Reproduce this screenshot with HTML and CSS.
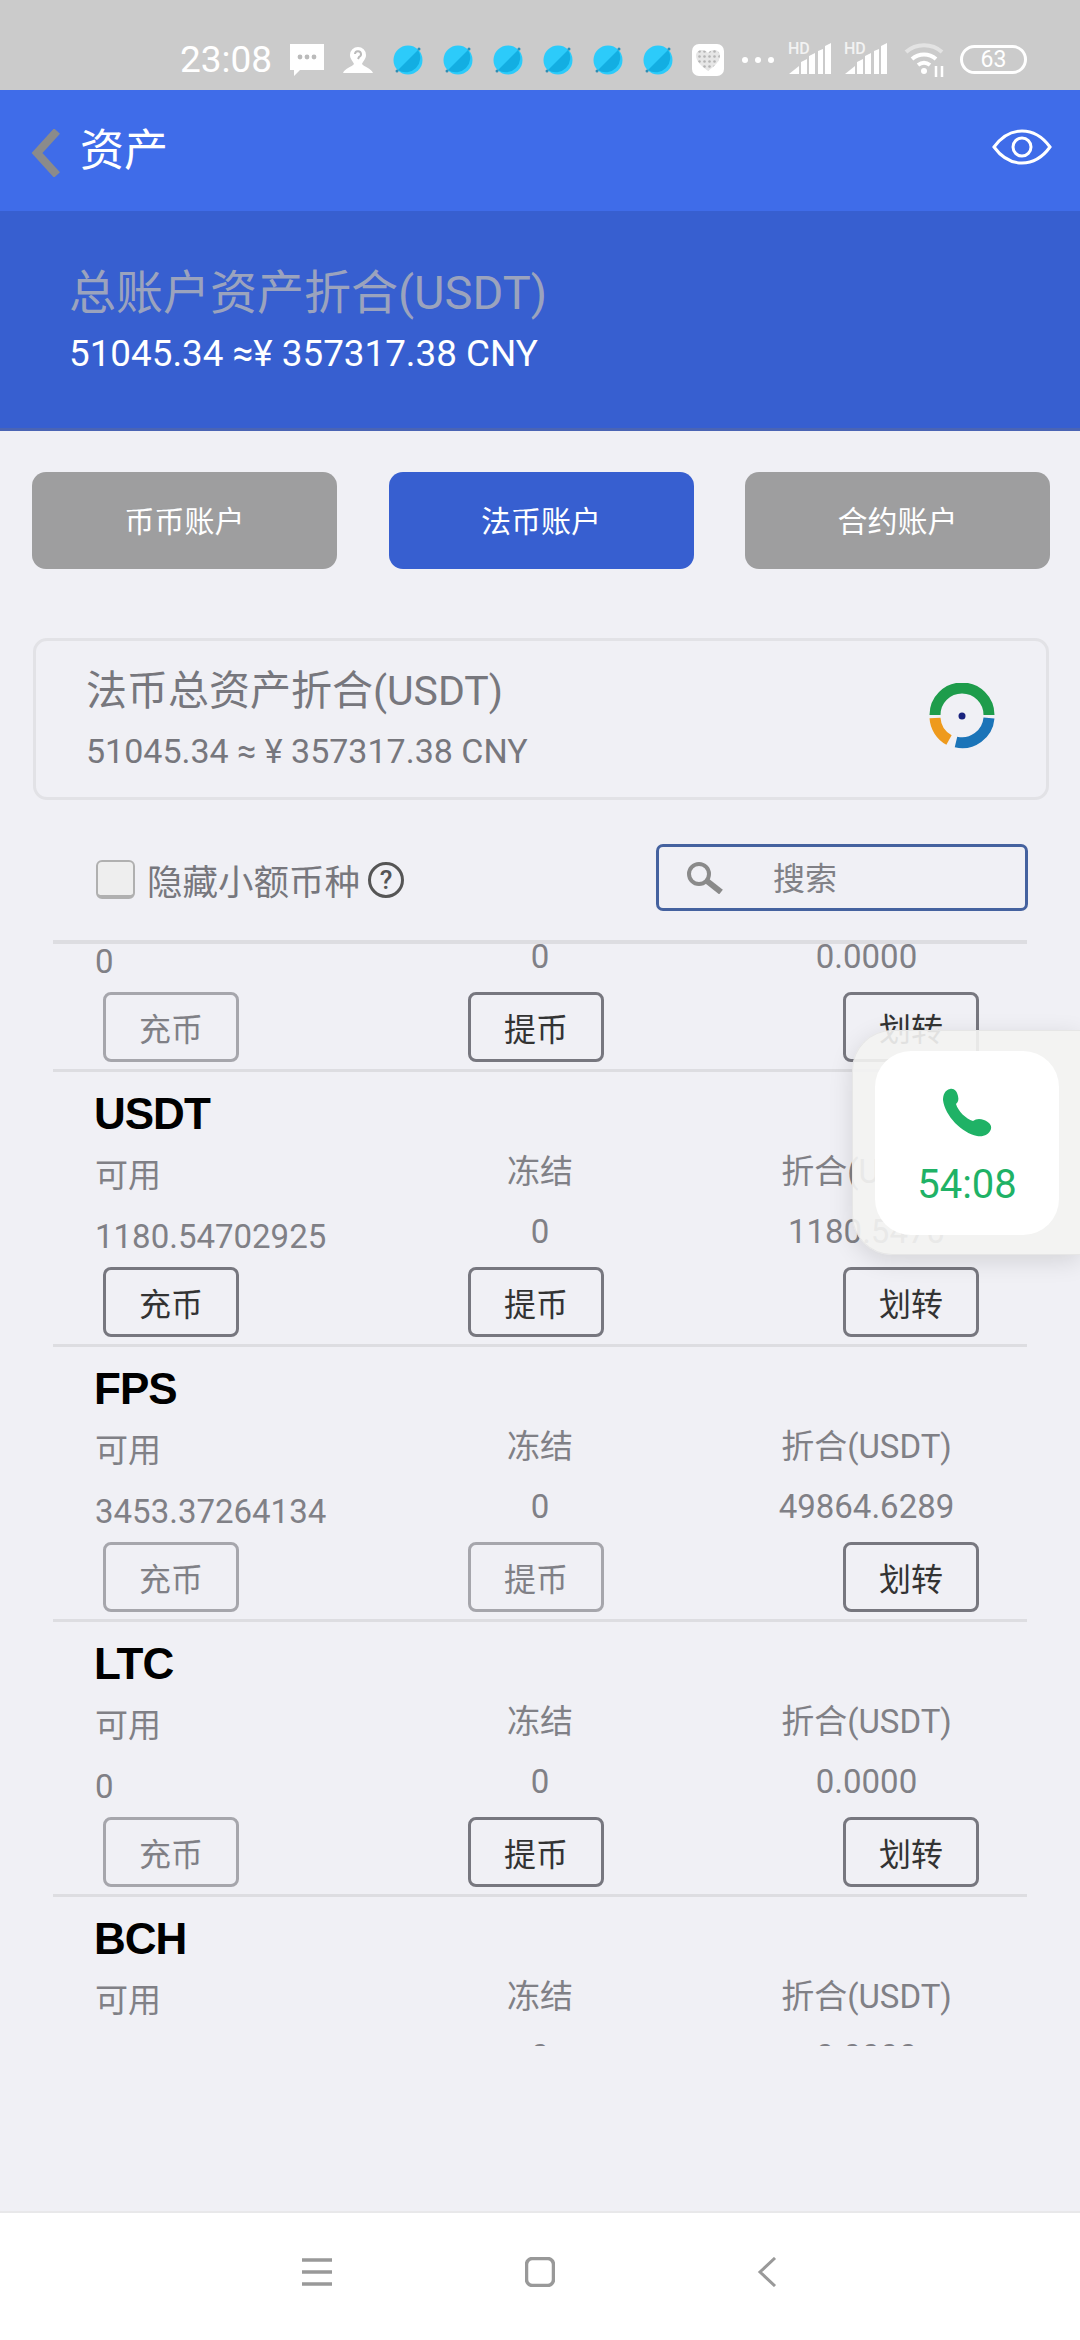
FILE: index.html
```html
<!DOCTYPE html>
<html lang="zh-CN">
<head>
    <meta charset="UTF-8">
    <meta name="viewport" content="width=device-width, initial-scale=1.0">
    <title>资产</title>
    <link rel="stylesheet" href="styles.css">
</head>
<body>
    <svg class="defs" width="0" height="0">
        <symbol id="globe" viewBox="0 0 32 32">
            <circle cx="16" cy="16" r="14.500" fill="#2ccbfa"/>
            <path d="M26 6A14.500 14.500 0 0 1 6 26Z" fill="#13aee2"/>
            <circle cx="27" cy="5" r="1.500" fill="#2f8fb5"/>
            <circle cx="5" cy="27" r="1.500" fill="#2f8fb5"/>
        </symbol>
        <symbol id="signal" viewBox="0 0 44 36">
            <text x="0" y="12" class="hd">HD</text>
            <path d="M1 32l10-8v8zM13 32V20l6-3v15zM21 32V14l6-3v21zM30 32V9l5-2v25zM37 32V4l6-3v31z" fill="#fff"/>
        </symbol>
        <pattern id="heart-dots" width="5" height="5" patternUnits="userSpaceOnUse">
            <rect width="5" height="5" fill="#e6e6e6"/>
            <circle cx="2.500" cy="2.500" r="1.300" fill="#b4b4b4"/>
        </pattern>
    </svg>

    <div class="app">
        <div class="status-bar">
            <span class="time">23:08</span>
            <svg class="st-msg" width="34" height="32" viewBox="0 0 34 32"><path d="M0 0h34v26H10l-6 6v-6H0z" fill="#fff"/><circle cx="10" cy="13" r="2.400" fill="#bbb"/><circle cx="17" cy="13" r="2.400" fill="#bbb"/><circle cx="24" cy="13" r="2.400" fill="#bbb"/></svg>
            <svg class="st-person" width="30" height="27" viewBox="0 0 30 27"><path d="M15 1a8 8 0 0 1 8 8c0 4-3 6-4 9 2 3 9 4 11 9H0c2-5 9-6 11-9-1-3-4-5-4-9a8 8 0 0 1 8-8z" fill="#fff"/><path d="M12 8a3 3 0 1 1 4 3l-1 2" stroke="#bbb" stroke-width="2" fill="none"/></svg>
            <svg class="st-globe" width="32" height="32"><use href="#globe"/></svg>
            <svg class="st-globe" width="32" height="32"><use href="#globe"/></svg>
            <svg class="st-globe" width="32" height="32"><use href="#globe"/></svg>
            <svg class="st-globe" width="32" height="32"><use href="#globe"/></svg>
            <svg class="st-globe" width="32" height="32"><use href="#globe"/></svg>
            <svg class="st-globe" width="32" height="32"><use href="#globe"/></svg>
            <svg class="st-heart" width="32" height="32" viewBox="0 0 32 32"><rect width="32" height="32" rx="7" fill="#fff"/><path d="M16 27C9 22 4 17 4 11.500C4 8 7 6 10 6c2.500 0 4.500 1 6 3 1.500-2 3.500-3 6-3 3 0 6 2 6 5.500C28 17 23 22 16 27z" fill="url(#heart-dots)"/></svg>
            <span class="st-dots"><i></i><i></i><i></i></span>
            <svg class="st-signal" width="44" height="36"><use href="#signal"/></svg>
            <svg class="st-signal" width="44" height="36"><use href="#signal"/></svg>
            <svg class="st-wifi" width="42" height="36" viewBox="0 0 42 36"><path d="M2 10C12 1 28 1 38 10" stroke="#e3e3e3" stroke-width="4" fill="none"/><path d="M8 17c7-6 17-6 24 0M14 23c4-3 8-3 12 0" stroke="#fff" stroke-width="4" fill="none"/><circle cx="20" cy="29" r="3" fill="#fff"/><path d="M32 24v11M38 24v11" stroke="#fff" stroke-width="2.500"/></svg>
            <span class="battery">63</span>
        </div>

        <div class="header">
            <svg class="back" width="30" height="48" viewBox="0 0 30 48"><path d="M26 2L6 24l20 22" stroke="#8b8b8b" stroke-width="8" fill="none"/></svg>
            <h1>资产</h1>
            <svg class="eye" width="60" height="36" viewBox="0 0 60 36"><path d="M2 18C10 7 20 2 30 2s20 5 28 16c-8 11-18 16-28 16S10 29 2 18z" stroke="#fff" stroke-width="3" fill="none"/><circle cx="30" cy="18" r="9" stroke="#fff" stroke-width="3" fill="none"/></svg>
        </div>

        <div class="banner">
            <div class="banner-title">总账户资产折合(USDT)</div>
            <div class="banner-value">51045.34 ≈¥ 357317.38 CNY</div>
        </div>

        <div class="tabs">
            <div class="tab">币币账户</div>
            <div class="tab active">法币账户</div>
            <div class="tab">合约账户</div>
        </div>

        <div class="summary">
            <div>
                <div class="summary-title">法币总资产折合(USDT)</div>
                <div class="summary-value">51045.34 ≈ ¥ 357317.38 CNY</div>
            </div>
            <svg class="summary-logo" width="66" height="66" viewBox="0 0 66 66">
                <g fill="none" stroke-width="11">
                    <path d="M6 32A27 27 0 0 1 60 32" stroke="#1e9c4b"/>
                    <path d="M60 35A27 27 0 0 1 27 59" stroke="#1b74b8"/>
                    <path d="M6 35A27 27 0 0 0 20 57" stroke="#ee9a1d"/>
                </g>
                <circle cx="33" cy="33" r="3.500" fill="#1a237e"/>
            </svg>
        </div>

        <div class="toolbar">
            <label class="hide-small">
                <input type="checkbox">
                <span>隐藏小额币种</span>
                <span class="help">?</span>
            </label>
            <div class="search">
                <svg width="40" height="32" viewBox="0 0 40 32"><circle cx="13" cy="12" r="10" stroke="#8a8a8a" stroke-width="4" fill="none"/><path d="M21 19l14 11" stroke="#8a8a8a" stroke-width="6"/></svg>
                <span>搜索</span>
            </div>
        </div>

        <div class="list">
            <div class="list-inner">
                <div class="row-cut">
                    <div class="cells values"><div class="c1">0</div><div class="c2">0</div><div class="c3">0.0000</div></div>
                    <div class="actions"><div class="btn btn-1 off">充币</div><div class="btn btn-2">提币</div><div class="btn btn-3">划转</div></div>
                </div>
                <div class="row">
                    <div class="coin">USDT</div>
                    <div class="cells labels"><div class="c1">可用</div><div class="c2">冻结</div><div class="c3">折合(USDT)</div></div>
                    <div class="cells values"><div class="c1">1180.54702925</div><div class="c2">0</div><div class="c3">1180.5470</div></div>
                    <div class="actions"><div class="btn btn-1">充币</div><div class="btn btn-2">提币</div><div class="btn btn-3">划转</div></div>
                </div>
                <div class="row">
                    <div class="coin">FPS</div>
                    <div class="cells labels"><div class="c1">可用</div><div class="c2">冻结</div><div class="c3">折合(USDT)</div></div>
                    <div class="cells values"><div class="c1">3453.37264134</div><div class="c2">0</div><div class="c3">49864.6289</div></div>
                    <div class="actions"><div class="btn btn-1 off">充币</div><div class="btn btn-2 off">提币</div><div class="btn btn-3">划转</div></div>
                </div>
                <div class="row">
                    <div class="coin">LTC</div>
                    <div class="cells labels"><div class="c1">可用</div><div class="c2">冻结</div><div class="c3">折合(USDT)</div></div>
                    <div class="cells values"><div class="c1">0</div><div class="c2">0</div><div class="c3">0.0000</div></div>
                    <div class="actions"><div class="btn btn-1 off">充币</div><div class="btn btn-2">提币</div><div class="btn btn-3">划转</div></div>
                </div>
                <div class="row">
                    <div class="coin">BCH</div>
                    <div class="cells labels"><div class="c1">可用</div><div class="c2">冻结</div><div class="c3">折合(USDT)</div></div>
                    <div class="cells values"><div class="c1">0</div><div class="c2">0</div><div class="c3">0.0000</div></div>
                </div>
            </div>
        </div>

        <div class="nav">
            <svg class="nav-menu" width="30" height="28" viewBox="0 0 30 28"><path d="M0 2h30M0 14h30M0 26h30" stroke="#999" stroke-width="3.500"/></svg>
            <svg class="nav-home" width="30" height="30" viewBox="0 0 30 30"><rect x="1.500" y="1.500" width="27" height="27" rx="6" stroke="#999" stroke-width="3.500" fill="none"/></svg>
            <svg width="20" height="30" viewBox="0 0 20 30"><path d="M18 1L3 15l15 14" stroke="#999" stroke-width="3" fill="none"/></svg>
        </div>

        <!-- floating call window -->
        <div class="call">
            <div class="call-card">
                <svg width="50" height="50" viewBox="0 0 50 50"><path d="M8 1C12 0 15 3 16 8C17 12 16 14 14 16C16 23 24 31 31 33C34 31 37 30 42 32C47 34 50 37 49 41C47 47 41 49 35 48C20 45 3 28 1 12C1 7 3 2 8 1Z" fill="#1fb266"/></svg>
                <div class="call-time">54:08</div>
            </div>
        </div>
    </div>
</body>
</html>
```

FILE: styles.css
```css
:root {
    --header-blue: #3f6ce9;
    --banner-blue: #375fd0;
    --page-bg: #f0f0f5;
    --line: #dddde1;
    --muted: #808086;
}

* {
    box-sizing: border-box;
    margin: 0;
    padding: 0;
}

body {
    font-family: Roboto, "Noto Sans CJK SC", sans-serif;
    background: var(--page-bg);
}

.defs {
    display: block;
    height: 0;
}

.app {
    position: relative;
    width: 1080px;
    height: 2340px;
    display: flex;
    flex-direction: column;
    overflow: hidden;
}

/* status bar */
.status-bar {
    height: 90px;
    background: #cbcbcb;
    display: flex;
    align-items: center;
    padding: 29px 0 0 180px;
}

.time {
    color: #fff;
    font-size: 37px;
    width: 110px;
}

.st-msg {
    margin-right: 19px;
}

.st-person {
    margin-right: 19px;
}

.st-globe {
    margin-right: 18px;
}

.st-heart {
    margin-right: 18px;
}

.st-dots {
    display: flex;
    gap: 7px;
    margin-right: 14px;
}

.st-dots i {
    display: block;
    width: 6px;
    height: 6px;
    border-radius: 50%;
    background: #fff;
}

.st-signal {
    margin-right: 12px;
}

.hd {
    font: 500 16px Roboto, sans-serif;
    fill: #f2f2f2;
}

.st-wifi {
    margin-left: 4px;
    margin-right: 14px;
}

.battery {
    width: 67px;
    height: 29px;
    border: 3px solid #fff;
    border-radius: 15px;
    color: #fff;
    font-size: 23px;
    line-height: 23px;
    text-align: center;
}

/* header */
.header {
    height: 121px;
    background: var(--header-blue);
    display: flex;
    align-items: center;
    padding: 0 28px 0 31px;
}

.back {
    margin-top: 4px;
}

.header h1 {
    color: #fff;
    font-size: 44px;
    font-weight: 400;
    margin-left: 19px;
    flex: 1;
    margin-bottom: 7px;
}

.eye {
    margin-bottom: 7px;
}

.banner {
    height: 220px;
    background: var(--banner-blue);
    border-bottom: 3px solid #4a64b4;
    padding: 50px 0 0 69px;
}

.banner-title {
    color: #9ba3bd;
    font-size: 47px;
    line-height: 64px;
}

.banner-value {
    color: #fff;
    font-size: 36.800px;
    line-height: 58px;
}

/* account tabs */
.tabs {
    display: flex;
    justify-content: space-between;
    margin: 41px 30px 0 32px;
}

.tab {
    width: 305px;
    height: 97px;
    background: #9e9e9f;
    border-radius: 14px;
    color: #fff;
    font-size: 30px;
    line-height: 99px;
    text-align: center;
}

.tab.active {
    background: var(--banner-blue);
}

/* fiat summary card */
.summary {
    height: 162px;
    margin: 69px 31px 0 33px;
    border: 3px solid #e2e2e6;
    border-radius: 14px;
    padding: 4px 51px 0 50px;
    display: flex;
    align-items: center;
    justify-content: space-between;
}

.summary-title {
    color: #77777d;
    font-size: 41px;
    line-height: 60px;
}

.summary-value {
    color: #77777d;
    font-size: 34px;
    line-height: 60px;
}

.summary-logo {
    margin-top: -10px;
}

.toolbar {
    display: flex;
    justify-content: space-between;
    margin: 44px 52px 0 96px;
}

.hide-small {
    display: flex;
    align-items: center;
    padding-top: 4px;
    color: #77777d;
    font-size: 35.500px;
}

.hide-small input {
    appearance: none;
    width: 39px;
    height: 39px;
    background: #eee;
    border: 2px solid #b0b0b0;
    border-bottom-width: 4px;
    border-radius: 6px;
    margin-right: 12px;
}

.help {
    width: 36px;
    height: 36px;
    border: 3px solid #555;
    border-radius: 50%;
    color: #555;
    font-size: 26px;
    font-weight: 500;
    line-height: 30px;
    text-align: center;
    margin-left: 8px;
}

.search {
    width: 372px;
    height: 67px;
    border: 3px solid #45629f;
    border-radius: 7px;
    display: flex;
    align-items: center;
    padding-left: 27px;
    color: #808086;
    font-size: 32px;
}

.search span {
    margin-left: 47px;
    margin-bottom: 4px;
}

/* coin list, scrolled a bit so the first row is cut */
.list {
    height: 1106px;
    margin: 29px 53px 0;
    border-top: 4px solid var(--line);
    overflow: hidden;
}

.list-inner {
    margin-top: -12px;
}

.row-cut {
    height: 137px;
    padding-left: 42px;
}

.row {
    height: 275px;
    border-top: 3px solid var(--line);
    padding: 17px 0 0 42px;
}

.coin {
    color: #000;
    font-family: "Liberation Sans", sans-serif;
    font-size: 44px;
    font-weight: 700;
    letter-spacing: -1px;
    line-height: 50px;
    margin: 0 0 8px -1px;
}

.cells {
    display: flex;
    height: 60px;
    color: var(--muted);
    font-size: 33px;
    line-height: 49px;
}

.c1 {
    width: 285px;
}

.c2 {
    width: 320px;
    text-align: center;
}

.c3 {
    width: 327px;
    text-align: center;
    padding-left: 6px;
}

.labels .c1 {
    margin-top: 4px;
}

.values .c1 {
    margin-top: 5px;
}

.actions {
    display: flex;
}

.btn {
    width: 136px;
    height: 70px;
    border: 3px solid #77777f;
    border-radius: 8px;
    color: #333;
    font-size: 32px;
    line-height: 71px;
    text-align: center;
}

.btn.off {
    border-color: #a6a6ac;
    color: #808086;
}

.btn-1 {
    margin-left: 8px;
}

.btn-2 {
    margin-left: 229px;
}

.btn-3 {
    margin-left: 239px;
}

/* bottom navigation */
.nav {
    margin-top: auto;
    height: 129px;
    background: #fff;
    border-top: 2px solid #e8e8ea;
    display: flex;
    align-items: center;
    padding: 0 0 10px 302px;
}

.nav-menu {
    margin-right: 193px;
}

.nav-home {
    margin-right: 202px;
}

/* floating call window */
.call {
    position: absolute;
    top: 1030px;
    left: 852px;
    width: 228px;
    height: 225px;
    background: rgba(243, 243, 242, 0.91);
    border-radius: 40px 0 0 40px;
    border: 1px solid #e6e6e6;
    border-right: none;
    box-shadow: 0 6px 24px rgba(0, 0, 0, 0.12);
    padding: 20px 0 0 22px;
}

.call-card {
    width: 184px;
    height: 184px;
    background: #fff;
    border-radius: 36px;
    display: flex;
    flex-direction: column;
    align-items: center;
    padding-top: 37px;
}

.call-time {
    color: #1fb266;
    font-size: 40px;
    line-height: 48px;
    margin-top: 23px;
}
```
